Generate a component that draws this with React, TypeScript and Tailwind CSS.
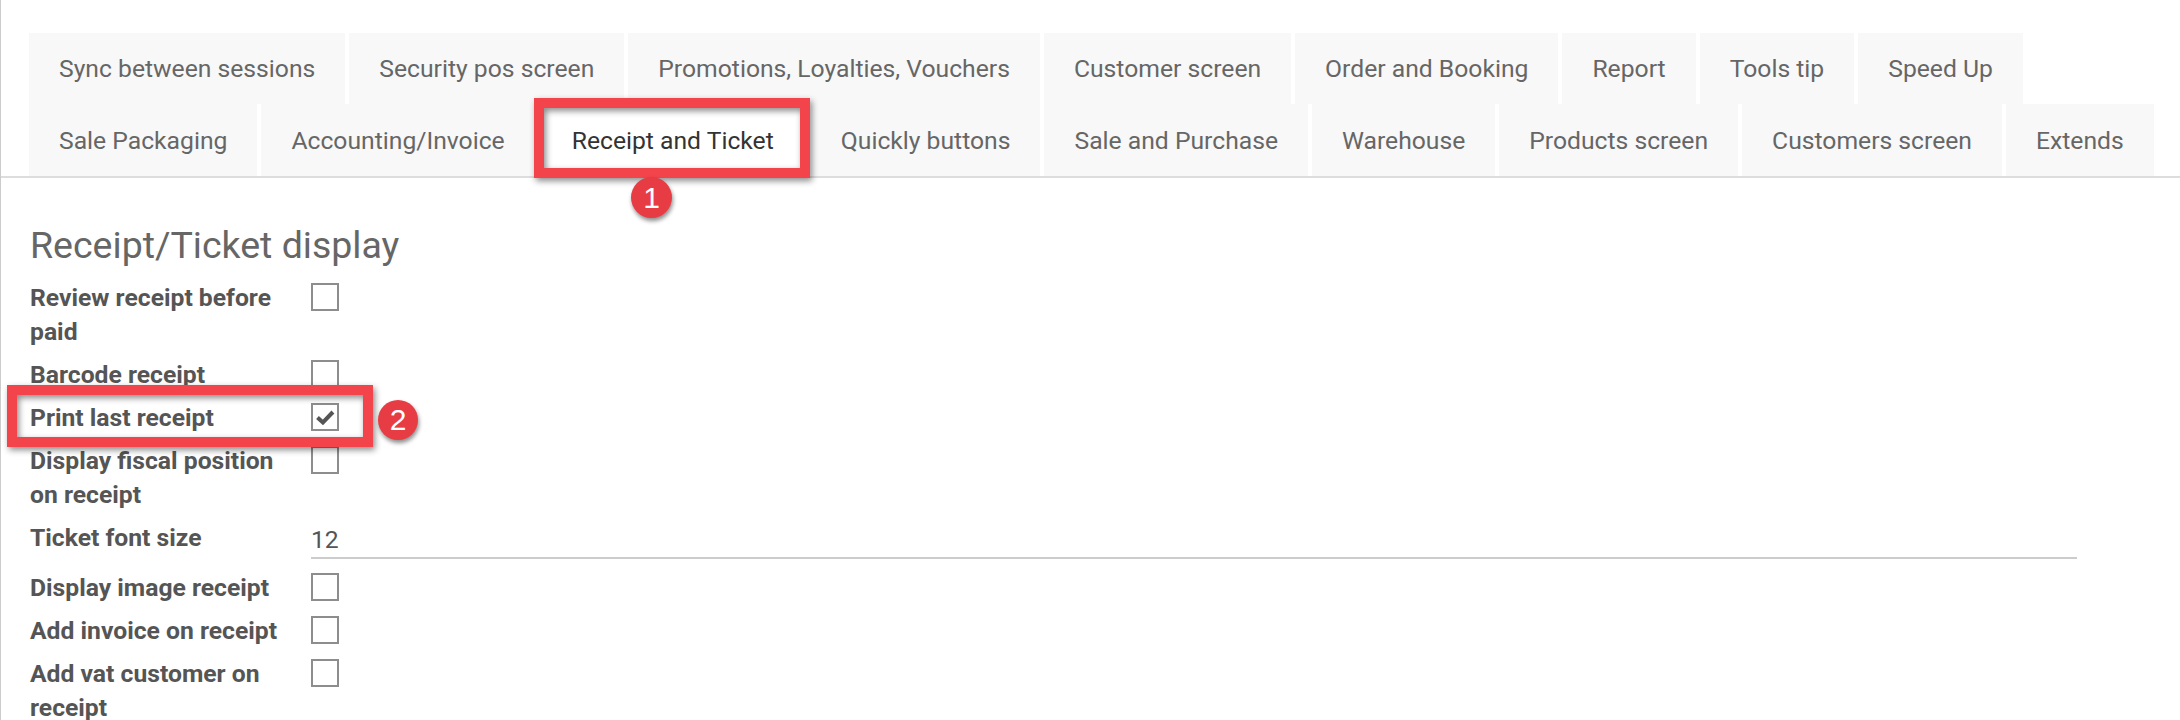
import React from "react";

const row1 = [
  "Sync between sessions",
  "Security pos screen",
  "Promotions, Loyalties, Vouchers",
  "Customer screen",
  "Order and Booking",
  "Report",
  "Tools tip",
  "Speed Up",
];
const row2 = [
  "Sale Packaging",
  "Accounting/Invoice",
  "Receipt and Ticket",
  "Quickly buttons",
  "Sale and Purchase",
  "Warehouse",
  "Products screen",
  "Customers screen",
  "Extends",
];

function Tab({ label, active }: { label: string; active?: boolean }) {
  return (
    <div
      className={
        active
          ? "flex items-center px-[32px] h-full bg-white text-[#333] whitespace-nowrap border-x border-t border-[#dddddd]"
          : "flex items-center px-[30px] h-full bg-[#f8f8f8] text-[#666] whitespace-nowrap"
      }
    >
      <span className="text-[24.7px] leading-[35px]">{label}</span>
    </div>
  );
}

function Checkbox({ checked }: { checked?: boolean }) {
  return (
    <div className="mt-[2px] w-[28px] h-[28px] border-2 border-[#8d8d8d] bg-white flex items-center justify-center shrink-0">
      {checked && (
        <svg width="20" height="20" viewBox="0 0 24 24">
          <path
            d="M3 12.5 L9.5 18.5 L21.5 6"
            fill="none"
            stroke="#555"
            strokeWidth="4.8"
            strokeLinejoin="miter"
          />
        </svg>
      )}
    </div>
  );
}

function Row({
  label,
  children,
  className,
}: {
  label: string;
  children: React.ReactNode;
  className?: string;
}) {
  return (
    <div className={"flex items-start " + (className ?? "mb-[9px]")}>
      <div className="w-[255px] mr-[26px] shrink-0 text-[24.7px] leading-[34px] font-bold text-[#555]">
        {label}
      </div>
      {children}
    </div>
  );
}

export default function App() {
  return (
    <div className="relative w-[2180px] h-[720px] overflow-hidden bg-white border-l border-[#cccccc] font-['Roboto',sans-serif]">
      {/* Tabs */}
      <div className="pt-[33px] pl-[28px] border-b-2 border-[#dddddd]">
        <div className="flex gap-[4px] h-[71px]">
          {row1.map((t) => (
            <Tab key={t} label={t} />
          ))}
        </div>
        <div className="flex gap-[4px] h-[72px]">
          {row2.map((t) => (
            <Tab key={t} label={t} active={t === "Receipt and Ticket"} />
          ))}
        </div>
      </div>

      {/* Form */}
      <div className="pl-[29px] pr-[103px]">
        <h1 className="mt-[45px] text-[37.5px] leading-[44px] font-normal text-[#666]">
          Receipt/Ticket display
        </h1>
        <div className="mt-[14px]">
          <Row label="Review receipt before paid">
            <Checkbox />
          </Row>
          <Row label="Barcode receipt">
            <Checkbox />
          </Row>
          <Row label="Print last receipt">
            <Checkbox checked />
          </Row>
          <Row label="Display fiscal position on receipt">
            <Checkbox />
          </Row>
          <Row label="Ticket font size" className="mt-[2px] mb-[12px]">
            <div className="flex-1 pt-[2px] border-b-2 border-[#cccccc] text-[24.7px] leading-[34px] text-[#555]">
              12
            </div>
          </Row>
          <Row label="Display image receipt">
            <Checkbox />
          </Row>
          <Row label="Add invoice on receipt">
            <Checkbox />
          </Row>
          <Row label="Add vat customer on receipt">
            <Checkbox />
          </Row>
        </div>
      </div>

      {/* Annotation 1 */}
      <div className="absolute left-[533px] top-[98px] w-[276px] h-[80px] border-[10px] border-[#f3434b] drop-shadow-[2px_3px_3px_rgba(0,0,0,0.45)]" />
      <div className="absolute left-[630px] top-[177px] w-[41px] h-[41px] rounded-full bg-[#e83c44] shadow-[1px_3px_4px_rgba(0,0,0,0.45)] flex items-center justify-center text-white text-[30px] leading-none font-['Liberation_Sans',sans-serif]">
        1
      </div>

      {/* Annotation 2 */}
      <div className="absolute left-[6px] top-[385px] w-[366px] h-[62px] border-[10px] border-[#f3434b] drop-shadow-[2px_3px_3px_rgba(0,0,0,0.45)]" />
      <div className="absolute left-[377px] top-[400px] w-[40px] h-[40px] rounded-full bg-[#e83c44] shadow-[1px_3px_4px_rgba(0,0,0,0.45)] flex items-center justify-center text-white text-[30px] leading-none font-['Liberation_Sans',sans-serif]">
        2
      </div>
    </div>
  );
}
